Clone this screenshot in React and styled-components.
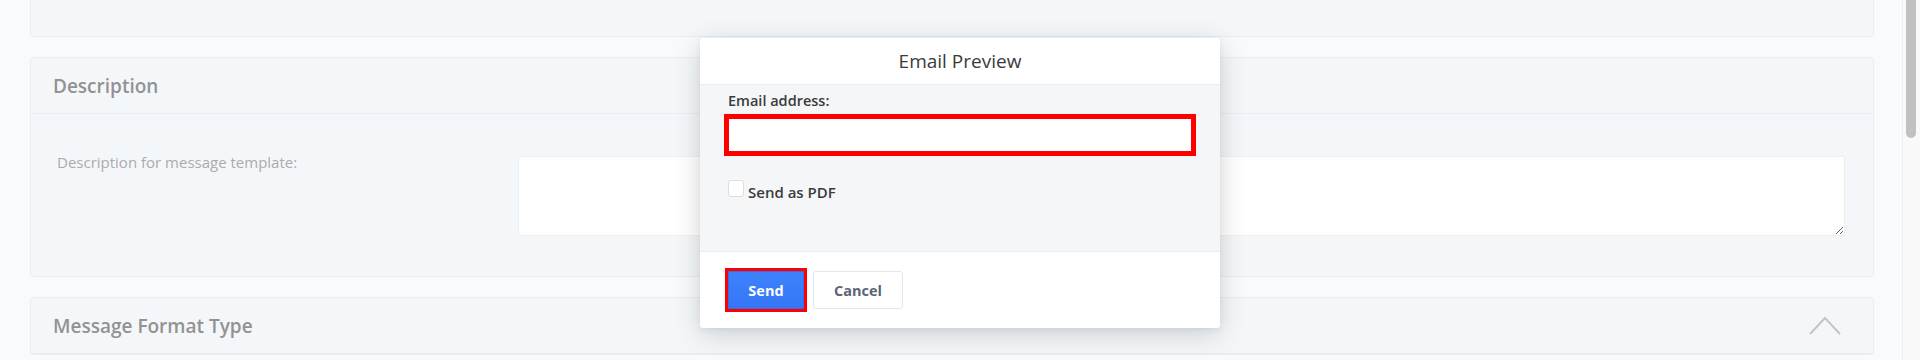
import React from 'react';
import styled, { createGlobalStyle } from 'styled-components';

const GlobalStyle = createGlobalStyle`
  html, body {
    margin: 0;
    padding: 0;
    height: 360px;
    overflow: hidden;
    background: #f8fafc;
    font-family: "Open Sans", Lato, "Liberation Sans", sans-serif;
  }
  * { box-sizing: border-box; }
`;

const Screen = styled.div`
  position: relative;
  display: flex;
  height: 360px;
  overflow: hidden;
`;

const Main = styled.div`
  flex: 1;
  display: flex;
  flex-direction: column;
  gap: 20px;
  padding: 0 28px 0 30px;
`;

const Scrollbar = styled.div`
  width: 18px;
  background: #f9f9f9;
  border-left: 1px solid #f0f0f0;
  padding: 0 4px 0 3px;
`;

const Thumb = styled.div`
  height: 138px;
  background: #c1c1c1;
  border-radius: 0 0 5px 5px;
`;

const Card = styled.section`
  background: #f4f7fa;
  border: 1px solid #e9edf1;
  border-radius: 4px;
  flex-shrink: 0;
  ${p => p.$stub && `
    height: 37px;
    border-top: none;
    border-radius: 0 0 4px 4px;
  `}
`;

const CardHeader = styled.div`
  height: 56px;
  display: flex;
  align-items: center;
  justify-content: space-between;
  padding: 0 32px 0 22px;
  border-bottom: 1px solid #e9edf1;
`;

const CardTitle = styled.h3`
  margin: 0;
  font-size: 19px;
  font-weight: 600;
  color: #929292;
`;

const CardBody = styled.div`
  display: grid;
  grid-template-columns: 461px 1fr;
  align-items: start;
  padding: 38px 28px 40px 26px;
`;

const FieldLabel = styled.label`
  font-size: 15px;
  line-height: 20px;
  color: #ababab;
`;

const TextArea = styled.textarea`
  margin-top: 4px;
  height: 80px;
  width: 100%;
  background: #fff;
  border: 1px solid #eceef0;
  border-radius: 2px;
  resize: vertical;
  outline: none;
`;

const Chevron = () => (
  <svg width="32" height="19" viewBox="0 0 32 19" fill="none">
    <path d="M1 18 L16 2 L31 18" stroke="#c4c4c4" strokeWidth="2" />
  </svg>
);

const Modal = styled.div`
  position: absolute;
  top: 38px;
  left: 50%;
  transform: translateX(-50%);
  width: 520px;
  background: #fff;
  border-radius: 3px;
  box-shadow: 0 6px 28px rgba(0, 0, 0, 0.16), 0 2px 6px rgba(0, 0, 0, 0.06);
  overflow: hidden;
`;

const ModalHeader = styled.div`
  height: 47px;
  display: flex;
  align-items: center;
  justify-content: center;
  border-bottom: 1px solid #eceef1;
  font-size: 19px;
  color: #3a3a3a;
`;

const ModalBody = styled.div`
  background: #f5f6f8;
  height: 166px;
  padding: 6px 28px 0 28px;
`;

const InputLabel = styled.div`
  font-size: 14.5px;
  line-height: 20px;
  font-weight: 600;
  color: #3b3b3b;
  margin-bottom: 7px;
`;

const EmailInput = styled.input`
  display: block;
  width: 100%;
  height: 34px;
  background: #fff;
  border: 1px solid #f00;
  outline: 4px solid #f00;
  padding: 0 8px;
`;

const CheckRow = styled.label`
  display: flex;
  align-items: flex-start;
  gap: 4px;
  margin-top: 28px;
  font-size: 15px;
  font-weight: 600;
  color: #3b3b3b;
`;

const Box = styled.span`
  width: 16px;
  height: 17px;
  background: #fff;
  border: 1px solid #dcdfe3;
  border-radius: 3px;
`;

const CheckText = styled.span`
  line-height: 20px;
  margin-top: 2px;
`;

const ModalFooter = styled.div`
  display: flex;
  gap: 9px;
  padding: 19px 28px 19px 28px;
  border-top: 1px solid #eceef1;
`;

const Button = styled.button`
  height: 38px;
  padding: 0;
  width: ${p => (p.$primary ? '76px' : '90px')};
  font-family: inherit;
  font-size: 14.5px;
  font-weight: 700;
  border-radius: ${p => (p.$primary ? '0' : '3px')};
  border: 1px solid ${p => (p.$primary ? '#2f6ff0' : '#e3e6ea')};
  background: ${p => (p.$primary ? 'linear-gradient(#3d82fd, #3576f7)' : '#fff')};
  color: ${p => (p.$primary ? '#fff' : '#5a6476')};
  outline: ${p => (p.$primary ? '3px solid #f00' : 'none')};
`;

export default function App() {
  return (
    <>
      <GlobalStyle />
      <Screen>
        <Main>
          <Card $stub />
          <Card>
            <CardHeader>
              <CardTitle>Description</CardTitle>
            </CardHeader>
            <CardBody>
              <FieldLabel>Description for message template:</FieldLabel>
              <TextArea />
            </CardBody>
          </Card>
          <Card>
            <CardHeader>
              <CardTitle>Message Format Type</CardTitle>
              <Chevron />
            </CardHeader>
          </Card>
        </Main>
        <Scrollbar>
          <Thumb />
        </Scrollbar>

        <Modal>
          <ModalHeader>Email Preview</ModalHeader>
          <ModalBody>
            <InputLabel>Email address:</InputLabel>
            <EmailInput type="text" />
            <CheckRow>
              <Box />
              <CheckText>Send as PDF</CheckText>
            </CheckRow>
          </ModalBody>
          <ModalFooter>
            <Button $primary>Send</Button>
            <Button>Cancel</Button>
          </ModalFooter>
        </Modal>
      </Screen>
    </>
  );
}
